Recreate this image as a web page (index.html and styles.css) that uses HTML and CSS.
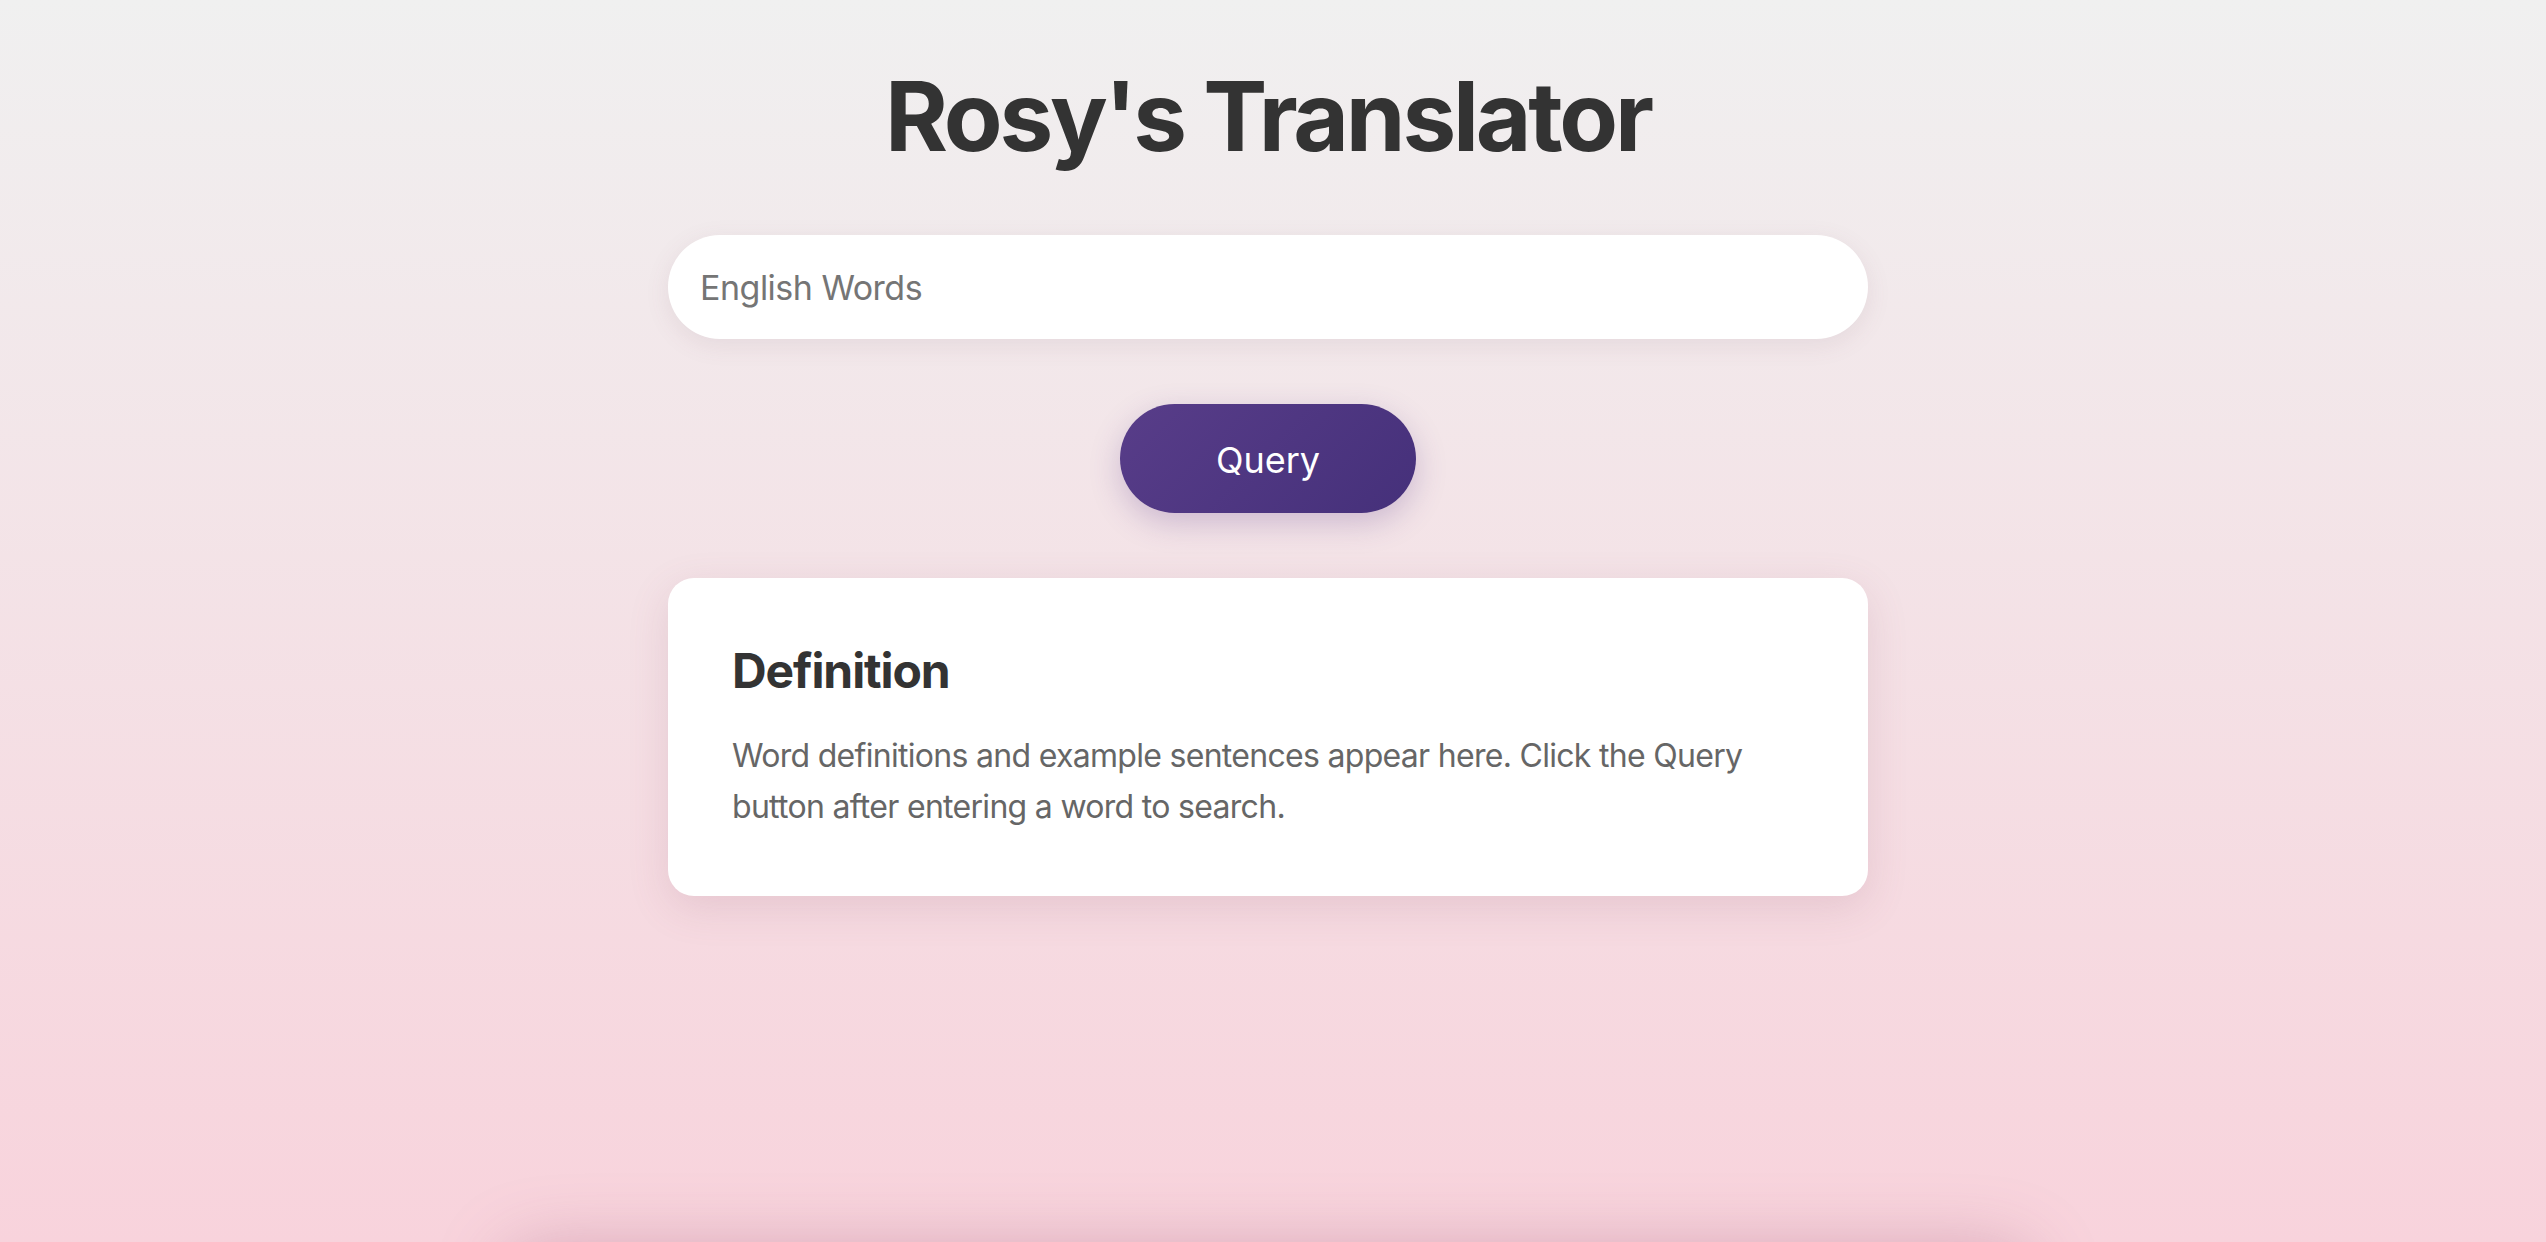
FILE: index.html
```html
<!DOCTYPE html>
<html lang="en">
<head>
<meta charset="utf-8">
<title>Rosy's Translator</title>
<link rel="stylesheet" href="styles.css">
</head>
<body>
<main class="app">
  <h1 class="title">Rosy's Translator</h1>
  <input class="word-input" type="text" placeholder="English Words">
  <button class="query-btn" type="button">Query</button>
  <section class="card">
    <h2 class="card-title">Definition</h2>
    <p class="card-text">Word definitions and example sentences appear here. Click the Query button after entering a word to search.</p>
  </section>
  <div class="below-panel"></div>
</main>
</body>
</html>
```
FILE: styles.css
```css
html {
  height: 100%;
  background: linear-gradient(180deg, #f0f0f0 0%, #f8d3dc 100%);
}
body {
  margin: 0;
  font-family: Inter, "Noto Sans", "Liberation Sans", sans-serif;
  color: #333;
  overflow: hidden;
  height: 100%;
}
.app {
  display: flex;
  flex-direction: column;
  align-items: center;
  padding-top: 58px;
  padding-right: 10px;
}
.title {
  margin: 0 0 61px;
  font-size: 96px;
  font-weight: 700;
  color: #333;
  line-height: 1.21;
  letter-spacing: -3.2px;
}
.word-input {
  box-sizing: border-box;
  width: 1200px;
  height: 104px;
  border: none;
  outline: none;
  border-radius: 52px;
  background: #fff;
  padding: 0 32px;
  font-family: inherit;
  font-size: 34px;
  letter-spacing: -0.5px;
  color: #333;
  box-shadow: 0 6px 24px rgba(120, 80, 100, 0.10);
}
.word-input::placeholder {
  color: #757575;
}
.query-btn {
  margin-top: 65px;
  padding: 35px 96px 30px;
  border: none;
  border-radius: 60px;
  background: linear-gradient(135deg, #583d89 0%, #45307a 100%);
  color: #fff;
  font-family: inherit;
  font-size: 36px;
  line-height: 1.21;
  box-shadow: 0 10px 30px rgba(90, 60, 140, 0.25);
  cursor: pointer;
}
.card {
  box-sizing: border-box;
  width: 1200px;
  margin-top: 65px;
  padding: 64px;
  background: #fff;
  border-radius: 26px;
  box-shadow: 0 12px 40px rgba(150, 90, 110, 0.16);
}
.card-title {
  margin: 0 0 30px;
  font-size: 48px;
  font-weight: 700;
  line-height: 1.21;
  letter-spacing: -1.1px;
  color: #333;
}
.card-text {
  margin: 0;
  font-size: 32px;
  line-height: 1.6;
  letter-spacing: -0.7px;
  color: #666;
}
.below-panel {
  width: 1520px;
  height: 300px;
  margin-top: 355px;
  background: transparent;
  border-radius: 30px;
  box-shadow: 0 0 70px rgba(160, 90, 120, 0.40);
}
```
